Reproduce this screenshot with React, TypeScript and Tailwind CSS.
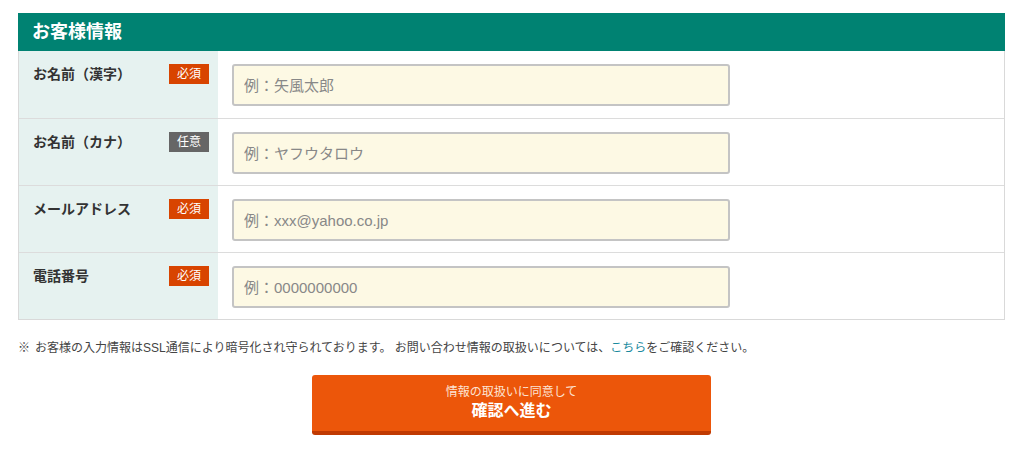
import React from "react";

const fields = [
  { label: "お名前（漢字）", required: true, placeholder: "例：矢風太郎" },
  { label: "お名前（カナ）", required: false, placeholder: "例：ヤフウタロウ" },
  { label: "メールアドレス", required: true, placeholder: "例：xxx@yahoo.co.jp" },
  { label: "電話番号", required: true, placeholder: "例：0000000000" },
];

export default function App() {
  return (
    <div
      className="w-[1024px] h-[453px] bg-white pt-[13px] px-[18px] text-[#333]"
      style={{ fontFamily: '"Liberation Sans", "Noto Sans CJK JP", sans-serif' }}
    >
      <div className="w-[987px]">
        {/* Header */}
        <div className="h-[38px] bg-[#008272] flex items-center px-[14px]">
          <h2 className="text-white text-[18px] font-bold leading-none">お客様情報</h2>
        </div>

        {/* Form table */}
        <div className="border-x border-b border-[#d9d9d9]">
          {fields.map((f, i) => (
            <div
              key={i}
              className={`flex h-[67px] ${i > 0 ? "border-t border-[#dcdcdc]" : ""}`}
            >
              <div className="w-[199px] bg-[#e6f2f0] flex items-start justify-between pl-[14px] pr-[9px] pt-[13px]">
                <span className="text-[14px] font-bold leading-[20px] text-[#333]">{f.label}</span>
                <span
                  className={`w-[40px] h-[20px] flex items-center justify-center text-[12px] text-white ${
                    f.required ? "bg-[#d84400]" : "bg-[#666666]"
                  }`}
                >
                  {f.required ? "必須" : "任意"}
                </span>
              </div>
              <div className="flex-1 pl-[14px] pt-[13px]">
                <input
                  type="text"
                  placeholder={f.placeholder}
                  className="w-[498px] h-[42px] rounded-[3px] border-2 border-[#c4c4c4] bg-[#fdf9e4] px-[10px] text-[15px] placeholder:text-[#888] outline-none"
                />
              </div>
            </div>
          ))}
        </div>

        {/* Note */}
        <p className="mt-[20px] text-[12px] leading-[16px] text-[#444]">
          <span className="mr-[5px]">※</span>
          お客様の入力情報はSSL通信により暗号化され守られております。 お問い合わせ情報の取扱いについては、
          <a href="#" className="text-[#1a8a9e]">こちら</a>
          をご確認ください。
        </p>

        {/* Button */}
        <div className="flex justify-center mt-[19px]">
          <button className="w-[399px] h-[60px] rounded-[3px] bg-[#ec560a] border-b-[4px] border-[#c03a02] flex flex-col items-center justify-center text-white">
            <span className="text-[12px] leading-[16px] text-[#fde3d3]">情報の取扱いに同意して</span>
            <span className="text-[16px] font-bold leading-[22px]">確認へ進む</span>
          </button>
        </div>
      </div>
    </div>
  );
}
